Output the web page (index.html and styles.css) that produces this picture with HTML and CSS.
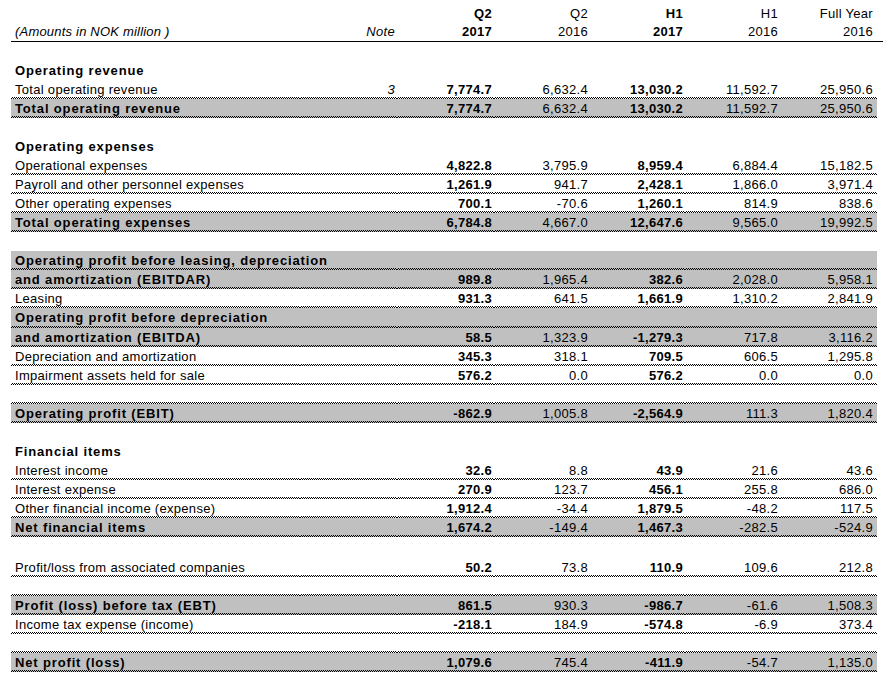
FILE: index.html
```html
<!DOCTYPE html>
<html>
<head>
<meta charset="utf-8">
<link rel="stylesheet" href="styles.css">
</head>
<body>
<table class="sheet">
<colgroup>
<col class="c-lbl"><col class="c-note"><col class="c-q"><col class="c-q2"><col class="c-h"><col class="c-h2"><col class="c-fy"><col class="c-x">
</colgroup>
<tbody>
<tr><td class="lbl"></td><td></td><td class="b">Q2</td><td>Q2</td><td class="b">H1</td><td>H1</td><td class="fy">Full Year</td><td class="x"></td></tr>
<tr class="hdr"><td class="lbl i">(Amounts in NOK million )</td><td class="i">Note</td><td class="b">2017</td><td>2016</td><td class="b">2017</td><td>2016</td><td class="fy">2016</td><td class="x"></td></tr>
<tr><td class="lbl"></td><td></td><td></td><td></td><td></td><td></td><td class="fy"></td><td class="x"></td></tr>

<tr><td class="lbl b">Operating revenue</td><td></td><td></td><td></td><td></td><td></td><td class="fy"></td><td class="x"></td></tr>
<tr class="d"><td class="lbl">Total operating revenue</td><td class="i">3</td><td class="b">7,774.7</td><td>6,632.4</td><td class="b">13,030.2</td><td>11,592.7</td><td class="fy">25,950.6</td><td class="x"></td></tr>
<tr class="d g"><td class="lbl b">Total operating revenue</td><td></td><td class="b">7,774.7</td><td>6,632.4</td><td class="b">13,030.2</td><td>11,592.7</td><td class="fy">25,950.6</td><td class="x"></td></tr>
<tr><td class="lbl"></td><td></td><td></td><td></td><td></td><td></td><td class="fy"></td><td class="x"></td></tr>

<tr><td class="lbl b">Operating expenses</td><td></td><td></td><td></td><td></td><td></td><td class="fy"></td><td class="x"></td></tr>
<tr class="d"><td class="lbl">Operational expenses</td><td></td><td class="b">4,822.8</td><td>3,795.9</td><td class="b">8,959.4</td><td>6,884.4</td><td class="fy">15,182.5</td><td class="x"></td></tr>
<tr class="d"><td class="lbl">Payroll and other personnel expenses</td><td></td><td class="b">1,261.9</td><td>941.7</td><td class="b">2,428.1</td><td>1,866.0</td><td class="fy">3,971.4</td><td class="x"></td></tr>
<tr class="d"><td class="lbl">Other operating expenses</td><td></td><td class="b">700.1</td><td>-70.6</td><td class="b">1,260.1</td><td>814.9</td><td class="fy">838.6</td><td class="x"></td></tr>
<tr class="d g"><td class="lbl b">Total operating expenses</td><td></td><td class="b">6,784.8</td><td>4,667.0</td><td class="b">12,647.6</td><td>9,565.0</td><td class="fy">19,992.5</td><td class="x"></td></tr>
<tr><td class="lbl"></td><td></td><td></td><td></td><td></td><td></td><td class="fy"></td><td class="x"></td></tr>

<tr class="d g"><td class="lbl b">Operating profit before leasing, depreciation</td><td></td><td></td><td></td><td></td><td></td><td class="fy"></td><td class="x"></td></tr>
<tr class="d g"><td class="lbl b">and amortization (EBITDAR)</td><td></td><td class="b">989.8</td><td>1,965.4</td><td class="b">382.6</td><td>2,028.0</td><td class="fy">5,958.1</td><td class="x"></td></tr>
<tr class="d"><td class="lbl">Leasing</td><td></td><td class="b">931.3</td><td>641.5</td><td class="b">1,661.9</td><td>1,310.2</td><td class="fy">2,841.9</td><td class="x"></td></tr>
<tr class="d g tall"><td class="lbl b">Operating profit before depreciation</td><td></td><td></td><td></td><td></td><td></td><td class="fy"></td><td class="x"></td></tr>
<tr class="d g"><td class="lbl b">and amortization (EBITDA)</td><td></td><td class="b">58.5</td><td>1,323.9</td><td class="b">-1,279.3</td><td>717.8</td><td class="fy">3,116.2</td><td class="x"></td></tr>
<tr class="d"><td class="lbl">Depreciation and amortization</td><td></td><td class="b">345.3</td><td>318.1</td><td class="b">709.5</td><td>606.5</td><td class="fy">1,295.8</td><td class="x"></td></tr>
<tr class="d"><td class="lbl">Impairment assets held for sale</td><td></td><td class="b">576.2</td><td>0.0</td><td class="b">576.2</td><td>0.0</td><td class="fy">0.0</td><td class="x"></td></tr>
<tr class="d"><td class="lbl"></td><td></td><td></td><td></td><td></td><td></td><td class="fy"></td><td class="x"></td></tr>
<tr class="d g"><td class="lbl b">Operating profit (EBIT)</td><td></td><td class="b">-862.9</td><td>1,005.8</td><td class="b">-2,564.9</td><td>111.3</td><td class="fy">1,820.4</td><td class="x"></td></tr>
<tr><td class="lbl"></td><td></td><td></td><td></td><td></td><td></td><td class="fy"></td><td class="x"></td></tr>

<tr><td class="lbl b">Financial items</td><td></td><td></td><td></td><td></td><td></td><td class="fy"></td><td class="x"></td></tr>
<tr class="d"><td class="lbl">Interest income</td><td></td><td class="b">32.6</td><td>8.8</td><td class="b">43.9</td><td>21.6</td><td class="fy">43.6</td><td class="x"></td></tr>
<tr class="d"><td class="lbl">Interest expense</td><td></td><td class="b">270.9</td><td>123.7</td><td class="b">456.1</td><td>255.8</td><td class="fy">686.0</td><td class="x"></td></tr>
<tr class="d"><td class="lbl">Other financial income (expense)</td><td></td><td class="b">1,912.4</td><td>-34.4</td><td class="b">1,879.5</td><td>-48.2</td><td class="fy">117.5</td><td class="x"></td></tr>
<tr class="d g"><td class="lbl b">Net financial items</td><td></td><td class="b">1,674.2</td><td>-149.4</td><td class="b">1,467.3</td><td>-282.5</td><td class="fy">-524.9</td><td class="x"></td></tr>
<tr class="taller"><td class="lbl"></td><td></td><td></td><td></td><td></td><td></td><td class="fy"></td><td class="x"></td></tr>

<tr class="d"><td class="lbl">Profit/loss from associated companies</td><td></td><td class="b">50.2</td><td>73.8</td><td class="b">110.9</td><td>109.6</td><td class="fy">212.8</td><td class="x"></td></tr>
<tr class="d"><td class="lbl"></td><td></td><td></td><td></td><td></td><td></td><td class="fy"></td><td class="x"></td></tr>
<tr class="d g"><td class="lbl b">Profit (loss) before tax (EBT)</td><td></td><td class="b">861.5</td><td>930.3</td><td class="b">-986.7</td><td>-61.6</td><td class="fy">1,508.3</td><td class="x"></td></tr>
<tr class="d"><td class="lbl">Income tax expense (income)</td><td></td><td class="b">-218.1</td><td>184.9</td><td class="b">-574.8</td><td>-6.9</td><td class="fy">373.4</td><td class="x"></td></tr>
<tr class="d"><td class="lbl"></td><td></td><td></td><td></td><td></td><td></td><td class="fy"></td><td class="x"></td></tr>
<tr class="d g"><td class="lbl b">Net profit (loss)</td><td></td><td class="b">1,079.6</td><td>745.4</td><td class="b">-411.9</td><td>-54.7</td><td class="fy">1,135.0</td><td class="x"></td></tr>
</tbody>
</table>
</body>
</html>
```
FILE: styles.css
```css
html, body {
  margin: 0;
  padding: 0;
  background: #fff;
}
body {
  font-family: "Liberation Sans", Arial, sans-serif;
  font-size: 13px;
  color: #000;
}
.sheet {
  margin: 4px 0 0 11px;
  border-collapse: separate;
  border-spacing: 0;
  table-layout: fixed;
  width: 872px;
}
.c-lbl { width: 289px; }
.c-note { width: 97px; }
.c-q { width: 97px; }
.c-q2 { width: 96px; }
.c-h { width: 95px; }
.c-h2 { width: 95px; }
.c-fy { width: 97px; }
.c-x { width: 6px; }

.sheet td {
  box-sizing: border-box;
  height: 19px;
  padding: 0 2px 0 0;
  line-height: 18px;
  white-space: nowrap;
  text-align: right;
  vertical-align: middle;
  letter-spacing: 0.3px;
}
.sheet td.fy {
  padding-right: 4px;
}
.sheet td.lbl {
  text-align: left;
  padding: 0 0 0 4px;
  letter-spacing: 0.3px;
}
.sheet td.b { font-weight: bold; letter-spacing: 0.3px; }
.sheet td.lbl.b { letter-spacing: 0.85px; }
.sheet td.i { font-style: italic; }
.sheet td.lbl.i { letter-spacing: 0.2px; }

.sheet tr.hdr td {
  border-bottom: 1px solid #000;
}
.sheet tr.g td:not(.x) {
  background-color: #c0c0c0;
}
.sheet tr.d td:not(.x) {
  background-image:
    linear-gradient(90deg, #000 50%, transparent 50%),
    linear-gradient(90deg, transparent 50%, #000 50%);
  background-size: 2px 1px, 2px 1px;
  background-position: 0 100%, 0 calc(100% - 1px);
  background-repeat: repeat-x;
}
.sheet tr.tall td {
  height: 20px;
}
.sheet tr.taller td {
  height: 21px;
}
```
